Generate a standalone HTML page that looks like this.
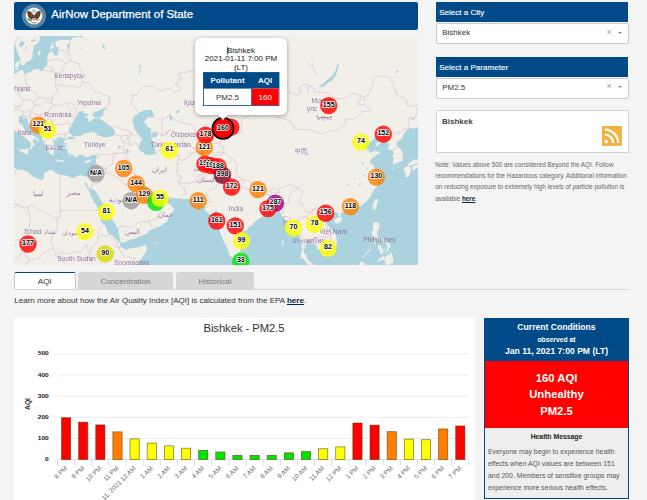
<!DOCTYPE html>
<html>
<head>
<meta charset="utf-8">
<title>AirNow Department of State</title>
<style>
html,body{margin:0;padding:0;}
body{width:647px;height:500px;overflow:hidden;background:#f4f4f4;font-family:"Liberation Sans",sans-serif;position:relative;color:#333;}
.abs{position:absolute;}
#hdr{left:14px;top:2px;width:404px;height:27.5px;background:#004a87;border-radius:2px;}
#hdr .t{position:absolute;left:37.3px;top:5.2px;font-size:11.4px;line-height:14px;color:#fff;white-space:nowrap;-webkit-text-stroke:0.25px #fff;}
#map{left:14px;top:36px;width:404px;height:229px;background:#f2efe9;overflow:hidden;}
.sh{background:#004a87;color:#fff;font-size:8.06px;line-height:21.4px;height:20.4px;padding-left:3.2px;box-sizing:border-box;-webkit-text-stroke:0.12px #fff;}
.dd{background:#fff;border:1px solid #ccc;border-radius:2px;box-sizing:border-box;height:20.9px;font-size:8px;line-height:17.9px;padding-left:5.2px;color:#333;}
.dd .x{position:absolute;right:16.3px;top:-0.6px;font-size:9px;color:#999;}
.dd .ar{position:absolute;right:6.3px;top:7.6px;width:0;height:0;border-left:2.3px solid transparent;border-right:2.3px solid transparent;border-top:2.8px solid #888;}
#citybox{left:436px;top:110px;width:193px;height:42.6px;background:#fff;border:1px solid #d2d2d2;box-sizing:border-box;}
#citybox .n{position:absolute;left:5px;top:6.3px;font-size:8px;font-weight:bold;color:#444;line-height:10px;}
#note{left:435.3px;top:158.8px;width:200px;font-size:6.32px;line-height:11.25px;color:#666;white-space:nowrap;}
#note b{color:#00264d;text-decoration:underline;}
.tab{top:272px;height:18px;box-sizing:border-box;border:1px solid #d6d6d6;border-radius:2.5px 2.5px 0 0;background:#d6d6d6;font-size:8px;line-height:18px;text-align:center;color:#777;}
.tab.sel{background:#fff;border-color:#c4c4c4;border-top:1.5px solid #004a87;border-bottom:none;color:#333;border-radius:2px 2px 0 0;line-height:17.6px;}
#tabline{left:14px;top:289px;width:615px;height:1px;background:#d6d6d6;}
#learn{left:14.3px;top:295px;font-size:8.04px;line-height:11px;color:#333;white-space:nowrap;}
#learn b{color:#00264d;text-decoration:underline;}
#chart{left:14px;top:318px;width:461px;height:182px;background:#fff;}
#cc{left:484px;top:318px;width:145px;height:181px;box-sizing:border-box;border:1px solid #004a87;background:#eee;}
#cc .h{background:#004a87;color:#fff;text-align:center;height:42px;font-weight:bold;font-size:8.6px;line-height:12px;padding-top:0;box-sizing:border-box;}
#cc .r{background:#f00;color:#fff;text-align:center;height:67px;font-weight:bold;font-size:11.3px;line-height:16.4px;box-sizing:border-box;padding-top:8.7px;}
#cc .hm{text-align:center;font-weight:bold;font-size:6.85px;line-height:10px;color:#222;margin-top:4.4px;}
#cc .tx{font-size:6.89px;line-height:12px;color:#555;margin:3.3px 0 0 3px;white-space:nowrap;}
</style>
</head>
<body>
<div id="hdr" class="abs"><svg class="abs" style="left:8px;top:1.8px" width="24" height="24" viewBox="-12 -12 24 24"><circle r="11.8" fill="#b9ab52"/><circle r="11.2" fill="#3b78bd"/><circle r="9.9" fill="none" stroke="#cfe0f2" stroke-width="0.9" stroke-dasharray="0.7 0.9" opacity=".55"/><circle r="8.7" fill="#c9bc6a"/><circle r="8.1" fill="#fff"/><circle cy="-4.8" r="2.1" fill="#a6d3ec"/><path d="M-1-1.6C-2.6-4.6-5.4-5.6-6.6-4.6C-7-1.2-5.6 2-2.6 3.9L-1 1.4ZM1-1.6C2.6-4.6 5.4-5.6 6.6-4.6C7-1.2 5.6 2 2.6 3.9L1 1.4Z" fill="#5b3b1d"/><path d="M-4.6-4.2L-3.2 2.6M-3.1-3.6L-2.2 2M4.6-4.2L3.2 2.6M3.1-3.6L2.2 2" stroke="#8a6a46" stroke-width=".35"/><path d="M-1.3-1.2h2.6v2.2h-2.6z" fill="#6b4a2a"/><ellipse cx="0" cy="-2.2" rx="1.1" ry="1.3" fill="#f4efe6"/><path d="M-1.8 1h3.6v1.2h-3.6z" fill="#2b4f9e"/><path d="M-1.8 2.2h3.6v1.5q-1.8 2-3.6 0z" fill="#e4534f"/><path d="M-0.9 2.2v2.4M0 2.2v2.9M0.9 2.2v2.4" stroke="#fff" stroke-width=".35"/><path d="M-6.2 2.4q1.4 2.8 3.8 2.2" stroke="#3d8b3d" stroke-width="1.3" fill="none"/><path d="M6 3q-1.4 2-3.6 1.8" stroke="#8a7a4a" stroke-width="0.7" fill="none"/><path d="M-2.6 5.6q2.6 1.2 5.2 0v1.2q-2.6 1.2-5.2 0z" fill="#8a7a6a" opacity=".75"/></svg><div class="t">AirNow Department of State</div></div>
<div id="map" class="abs"><!--MAP-->
<svg width="404" height="229" viewBox="0 0 404 229" style="position:absolute;left:0;top:0" font-family="Liberation Sans, sans-serif">
<defs><filter id="bl" x="-5%" y="-5%" width="110%" height="110%"><feGaussianBlur stdDeviation="0.45"/></filter><filter id="bl2" x="-5%" y="-5%" width="110%" height="110%"><feGaussianBlur stdDeviation="0.3"/></filter><filter id="sh" x="-20%" y="-20%" width="140%" height="150%"><feGaussianBlur stdDeviation="2"/></filter></defs>
<rect width="404" height="229" fill="#f2efe9"/>
<g filter="url(#bl)">
<path fill="#aad3df" d="M347.7 127.3 L348.2 125.5 L349.1 126.1 L349.4 127.7 L348.8 129.1 L348.1 128.6Z M352.2 132.5 L352.9 131.3 L354.0 131.7 L354.5 132.7 L353.7 133.7 L352.6 133.3Z M348.9 139.3 L349.5 138.5 L350.5 138.7 L350.9 139.4 L350.2 140.1 L349.3 139.8Z M344.8 148.4 L345.4 146.7 L346.4 147.2 L346.8 148.7 L346.1 150.1 L345.2 149.6Z M333.1 148.6 L333.8 147.5 L335.0 147.8 L335.4 148.8 L334.6 149.7 L333.6 149.4Z M357.4 140.6 L358.1 139.5 L359.3 139.8 L359.7 140.9 L358.9 141.8 L357.9 141.4Z M348.7 64.5 L349.4 62.5 L350.7 63.0 L350.0 64.8Z M380.9 37.2 L382.8 34.4 L385.1 34.9 L382.8 36.6Z M397.6 84.2 L397.9 81.4 L399.9 81.9 L399.6 84.2Z M26.0 -3.0 L64.0 -3.0 L63.7 1.3 L59.4 1.3 L56.2 4.2 L51.2 3.9 L48.0 3.5 L45.7 4.2 L43.0 4.8 L41.1 6.1 L41.4 8.7 L42.0 10.6 L44.7 11.5 L44.3 14.3 L44.2 18.0 L43.0 19.8 L40.4 19.5 L38.4 15.2 L35.5 16.4 L34.5 17.7 L33.2 22.8 L33.5 27.5 L32.9 29.8 L29.9 31.8 L29.6 34.6 L27.9 35.2 L25.6 35.1 L25.2 33.2 L24.3 32.7 L20.1 33.5 L16.8 35.8 L12.5 37.2 L10.9 37.7 L9.6 36.3 L8.9 33.8 L7.0 34.6 L5.0 34.9 L4.0 36.3 L1.7 37.2 L0.1 37.4 L-0.3 35.5 L-1.2 34.4 L-4.5 32.7 L-4.5 6.1 L1.0 8.0 L2.0 12.4 L3.3 15.5 L4.7 19.8 L6.6 22.2 L5.6 24.6 L6.6 27.5 L7.0 29.2 L9.6 29.2 L11.2 28.1 L12.2 25.7 L15.5 24.8 L17.1 24.0 L18.1 21.6 L18.4 18.6 L19.1 14.9 L19.4 10.6 L21.1 9.0 L23.4 8.0 L25.3 4.8 L26.3 2.2 L25.3 0.3Z M-6.2 85.6 L-3.5 87.2 L-1.9 89.7 L-1.2 92.4 L0.7 94.6 L3.0 95.9 L4.3 97.5 L5.6 98.8 L8.9 99.9 L10.9 101.6 L11.5 102.5 L12.9 102.3 L13.5 103.8 L14.5 105.1 L15.5 104.8 L16.8 107.8 L17.4 109.7 L16.5 110.6 L15.6 113.1 L17.0 113.8 L17.8 112.5 L18.6 110.4 L20.6 109.1 L20.4 107.6 L18.4 106.1 L19.7 103.3 L20.7 103.1 L23.4 104.8 L24.5 105.9 L25.0 104.4 L23.2 102.3 L19.6 100.1 L16.5 98.1 L17.4 96.8 L14.5 96.8 L13.5 96.4 L10.9 94.4 L8.6 89.2 L5.5 87.2 L4.7 85.1 L5.3 83.0 L4.7 80.9 L7.3 79.5 L9.4 79.8 L8.6 80.7 L9.7 83.5 L11.7 81.4 L13.2 82.8 L14.2 86.9 L16.5 88.8 L18.3 89.7 L21.4 91.7 L23.7 93.5 L25.6 94.6 L27.0 95.9 L28.1 99.4 L28.1 103.1 L29.9 105.7 L30.7 107.2 L32.4 109.5 L33.5 112.3 L37.8 112.0 L39.4 113.7 L35.5 112.5 L33.7 113.9 L34.7 115.0 L35.3 116.6 L35.5 118.5 L36.8 117.6 L38.1 120.1 L38.4 118.7 L40.4 119.9 L39.9 118.9 L39.1 115.4 L40.4 116.0 L39.8 113.9 L41.7 113.7 L43.0 115.0 L43.0 113.5 L41.7 111.6 L39.8 109.7 L38.4 109.9 L39.8 108.9 L39.6 107.8 L40.9 108.7 L40.1 106.8 L39.4 105.5 L38.4 104.0 L39.4 102.5 L40.9 104.2 L42.0 105.3 L41.4 104.0 L43.0 105.3 L42.4 103.6 L44.3 104.4 L43.0 103.3 L42.2 102.0 L44.3 101.2 L46.8 101.0 L49.3 101.4 L49.8 102.5 L52.2 102.3 L50.2 104.8 L51.9 103.3 L53.9 102.0 L54.5 100.7 L59.3 100.7 L62.4 101.8 L59.4 102.3 L59.1 103.3 L56.0 103.3 L53.9 103.3 L51.9 103.6 L50.9 104.4 L50.1 105.3 L49.8 107.2 L52.7 107.0 L51.7 108.0 L52.5 109.7 L52.1 110.8 L53.2 111.6 L50.9 110.8 L50.6 112.3 L52.2 112.9 L53.7 114.1 L53.7 116.2 L54.2 117.6 L56.2 117.6 L54.2 118.9 L57.1 118.5 L59.8 119.3 L61.4 121.1 L63.2 120.5 L64.0 120.9 L65.0 118.3 L69.3 119.5 L72.1 121.5 L75.7 120.5 L77.8 118.5 L80.4 119.5 L83.0 118.0 L82.9 119.5 L82.2 121.5 L81.6 123.7 L82.1 126.1 L81.7 127.9 L80.8 130.1 L79.8 132.7 L79.1 134.4 L78.3 137.4 L77.1 139.5 L75.2 140.8 L70.3 140.4 L68.6 139.5 L66.3 139.1 L64.0 139.7 L62.4 140.6 L59.1 142.0 L53.5 140.1 L49.3 139.1 L46.8 139.3 L43.0 137.4 L38.6 134.6 L36.1 134.1 L30.1 137.2 L30.2 141.8 L27.3 144.3 L23.4 142.4 L18.8 140.6 L13.8 136.0 L11.1 135.0 L7.6 134.1 L4.0 133.9 L0.7 131.7 L-2.6 130.1 L-0.4 126.7 L0.6 123.7 L-0.8 122.3 L-0.9 120.1 L0.6 117.4 L-1.9 118.3 L-3.4 116.4 L-6.2 116.4Z M59.8 99.9 L56.5 97.9 L54.5 94.2 L56.0 91.0 L57.6 90.1 L58.3 86.7 L61.6 82.1 L61.9 80.7 L63.4 78.8 L65.2 75.7 L67.6 75.3 L70.3 75.7 L68.3 76.0 L70.9 77.6 L72.2 77.6 L74.5 77.6 L74.5 78.8 L70.9 81.2 L73.9 81.9 L74.4 83.5 L74.0 84.9 L75.0 85.6 L76.3 85.1 L77.1 84.4 L79.1 83.5 L80.4 82.6 L81.7 82.8 L83.9 82.3 L84.4 81.2 L80.8 81.4 L79.1 79.5 L78.6 77.6 L80.1 76.5 L85.0 74.6 L87.5 72.9 L91.9 72.4 L93.2 72.9 L89.9 74.8 L89.4 77.9 L87.0 81.4 L85.2 80.9 L84.7 82.1 L86.7 83.3 L88.3 84.2 L89.1 84.9 L92.4 86.9 L94.5 89.2 L96.3 90.6 L98.8 91.9 L100.9 95.7 L100.8 97.9 L100.1 99.0 L97.2 100.5 L94.5 100.7 L90.3 101.2 L88.6 100.7 L86.7 100.1 L83.5 99.4 L82.4 97.7 L79.6 96.1 L75.0 96.5 L70.6 97.5 L68.6 98.8 L67.3 99.4 L66.5 100.3 L61.4 100.0Z M120.1 91.9 L122.7 96.1 L125.4 99.4 L127.3 102.5 L129.6 103.8 L128.0 103.6 L126.3 105.5 L126.0 107.8 L124.7 110.4 L124.7 111.8 L126.7 115.7 L129.0 116.0 L130.4 118.0 L132.9 119.1 L137.0 118.9 L141.4 118.3 L141.6 117.6 L141.1 116.2 L140.9 115.6 L140.8 111.4 L139.1 108.5 L137.8 107.4 L139.8 106.8 L140.1 105.1 L138.2 105.1 L137.3 102.9 L137.3 100.7 L139.8 101.8 L143.1 100.7 L143.7 97.2 L140.1 95.9 L137.8 98.6 L136.7 98.3 L136.3 96.4 L137.2 93.3 L134.2 91.0 L132.1 89.0 L130.9 86.5 L129.1 84.9 L131.6 84.9 L132.6 82.8 L134.5 80.9 L138.2 81.4 L140.1 80.0 L138.8 76.7 L138.2 73.8 L134.5 73.8 L129.3 74.6 L126.0 76.2 L123.4 78.6 L120.4 80.0 L119.1 82.3 L118.1 84.6 L118.8 86.5 L119.8 88.3Z M71.1 145.4 L71.6 146.7 L72.9 148.8 L74.5 151.8 L76.7 153.7 L77.0 153.1 L77.5 150.8 L78.0 149.0 L79.1 146.9 L78.9 147.8 L78.3 151.2 L77.8 152.5 L81.4 155.1 L83.9 159.2 L86.3 163.5 L89.1 166.9 L92.2 171.6 L92.7 176.2 L96.3 180.9 L99.0 184.4 L103.9 192.2 L105.2 199.3 L106.2 204.4 L106.8 206.6 L111.9 206.1 L114.2 204.2 L122.4 202.0 L125.4 200.2 L132.4 198.0 L135.5 194.6 L141.8 191.8 L145.7 190.3 L153.9 184.9 L153.6 182.7 L156.5 180.1 L160.5 172.7 L159.5 172.3 L156.5 168.7 L150.5 166.0 L149.1 163.2 L149.3 158.8 L148.3 159.7 L147.8 160.8 L145.7 162.8 L142.7 165.7 L138.2 166.8 L133.6 166.9 L132.6 165.3 L133.4 162.6 L133.6 160.4 L132.2 159.5 L130.9 162.3 L130.9 164.6 L129.0 161.3 L128.8 158.4 L128.8 157.5 L127.2 156.4 L124.4 153.8 L123.4 151.2 L121.8 147.7 L120.9 147.5 L122.4 145.4 L123.4 145.4 L124.7 143.9 L125.7 143.5 L128.8 145.0 L131.1 149.2 L135.0 153.3 L144.4 158.1 L149.0 155.8 L151.1 156.0 L153.9 161.3 L163.1 162.6 L168.8 163.3 L172.6 162.8 L176.4 163.0 L182.8 162.3 L184.1 164.2 L185.5 167.7 L188.0 168.7 L189.3 170.2 L191.8 171.4 L194.6 171.1 L190.8 172.8 L190.5 173.5 L192.6 175.7 L195.1 178.3 L197.2 179.0 L201.1 175.3 L202.4 173.4 L202.6 175.7 L202.9 177.6 L203.1 180.1 L203.1 184.9 L204.7 191.8 L206.4 197.1 L207.4 199.3 L209.7 205.8 L212.8 211.3 L214.4 215.6 L215.4 219.1 L216.5 220.6 L218.7 221.8 L220.8 219.5 L224.4 218.0 L226.2 214.5 L226.2 212.8 L226.2 209.1 L227.7 205.1 L227.2 200.4 L227.2 197.0 L230.5 194.7 L234.3 193.2 L234.1 191.8 L237.5 189.4 L242.8 184.1 L245.9 182.2 L248.7 180.4 L249.7 176.4 L251.3 175.8 L253.3 174.6 L255.6 175.8 L258.9 175.1 L261.5 173.7 L262.8 172.7 L265.4 173.4 L266.1 176.6 L267.1 178.7 L269.0 180.9 L271.2 183.5 L273.8 186.8 L274.4 189.8 L273.3 195.3 L274.6 195.8 L277.2 196.3 L279.2 194.2 L280.2 193.5 L282.1 190.8 L284.4 193.7 L285.1 197.8 L286.1 201.9 L287.7 207.3 L287.6 215.5 L286.7 219.3 L286.7 222.8 L288.7 221.9 L290.7 224.4 L292.5 226.7 L293.3 228.4 L293.5 230.7 L294.3 235.3 L121.8 235.3 L123.4 230.9 L125.0 227.1 L127.8 222.1 L131.3 217.1 L132.9 214.0 L132.4 209.3 L130.8 209.0 L125.7 211.1 L122.4 211.6 L118.5 211.8 L111.9 214.0 L107.0 211.0 L104.0 210.3 L105.8 210.1 L106.3 209.0 L106.3 207.1 L104.5 205.4 L98.6 199.7 L95.5 198.7 L93.7 196.6 L90.9 188.4 L88.1 187.0 L86.8 184.6 L86.3 182.9 L84.5 173.7 L81.7 167.7 L80.8 167.7 L78.8 163.5 L76.8 159.7 L75.7 157.3 L75.2 155.5 L72.9 151.4 L71.4 148.6 L70.4 146.7Z M303.5 235.3 L302.6 230.9 L299.7 228.1 L298.2 227.2 L296.4 225.7 L294.3 224.8 L292.6 220.8 L292.1 218.3 L290.2 218.1 L289.9 213.8 L291.7 209.5 L292.2 206.9 L292.5 204.9 L294.1 203.7 L295.4 204.2 L295.2 205.8 L295.3 206.6 L296.6 206.6 L299.2 207.1 L300.7 208.4 L302.0 210.1 L303.8 213.5 L306.1 213.6 L306.9 214.1 L309.0 215.5 L307.9 220.1 L309.7 219.6 L312.6 217.6 L314.5 214.8 L315.6 214.3 L318.9 212.5 L321.8 210.3 L322.5 209.1 L322.5 207.9 L323.3 205.8 L322.7 202.9 L321.5 198.2 L319.4 194.9 L317.6 193.4 L314.1 190.1 L311.2 185.8 L311.8 182.3 L314.5 179.0 L315.6 178.1 L318.6 176.2 L322.2 176.4 L324.3 176.6 L324.1 178.3 L324.9 180.6 L326.8 180.4 L326.6 177.4 L328.4 176.4 L331.7 175.3 L336.8 173.9 L336.9 171.8 L338.9 173.4 L342.8 171.8 L347.3 169.6 L351.7 165.7 L353.6 164.2 L356.8 160.1 L357.9 157.7 L360.7 153.1 L363.2 150.5 L364.3 146.1 L362.2 144.1 L360.9 143.9 L364.1 142.0 L364.1 139.1 L364.1 138.5 L360.9 133.7 L358.9 128.5 L355.6 126.7 L356.4 124.1 L359.1 121.5 L363.2 118.7 L366.4 116.8 L364.8 115.6 L362.5 115.4 L360.4 114.3 L357.6 116.4 L354.6 116.6 L355.5 114.3 L351.4 112.7 L350.5 111.0 L350.5 109.3 L353.3 108.7 L356.6 105.5 L360.9 102.0 L361.8 101.2 L365.0 102.5 L364.5 104.2 L362.5 107.2 L361.7 110.2 L363.5 109.7 L365.5 108.0 L367.8 106.6 L371.7 105.7 L372.2 105.9 L374.3 107.0 L375.3 108.0 L375.0 110.6 L373.2 113.1 L376.6 113.7 L379.6 115.8 L380.2 117.8 L378.1 118.7 L379.4 121.9 L378.7 126.5 L379.2 128.5 L383.3 126.9 L387.6 125.3 L388.7 123.7 L388.9 121.5 L388.7 117.6 L387.3 114.5 L386.1 112.7 L382.3 108.7 L382.8 105.9 L384.8 105.1 L388.1 102.3 L390.1 97.2 L392.0 95.0 L393.3 93.7 L396.9 91.5 L400.2 92.8 L403.8 91.0 L410.4 87.4 L410.4 235.3Z M5.0 8.0 L7.6 5.2 L10.6 5.5 L9.9 8.7 L7.6 10.9 L5.3 10.9Z M10.6 14.9 L11.9 10.6 L13.3 9.3 L12.5 12.4 L11.2 15.2Z M16.8 4.5 L20.1 3.2 L23.0 4.2 L20.1 5.2 L17.4 5.5Z M52.9 8.7 L54.5 7.4 L55.8 9.9 L54.5 11.8 L56.2 13.7 L56.6 14.6 L55.2 14.3 L54.2 12.4 L53.2 11.2Z M62.7 -3.0 L72.6 -3.0 L71.2 -0.4 L67.6 1.3 L66.0 1.6Z M88.0 10.6 L89.6 8.0 L90.9 9.0 L90.3 11.5 L91.9 13.1 L90.6 13.4Z M66.0 12.4 L67.5 11.2 L68.0 12.4 L67.0 13.1Z M161.8 76.2 L163.7 74.3 L166.4 74.8 L164.4 76.7 L162.8 77.6Z M155.2 78.6 L156.5 78.4 L158.2 81.4 L157.5 84.6 L155.9 85.1 L155.7 81.9Z M151.3 96.4 L153.2 95.9 L153.6 98.1 L151.9 98.6Z M205.4 78.1 L207.0 75.3 L210.3 74.3 L215.2 74.6 L220.2 75.3 L223.4 74.6 L224.1 76.2 L218.5 76.7 L213.6 76.2 L209.7 77.2 L208.0 80.5 L206.4 80.9Z M214.2 94.6 L216.9 93.5 L220.8 93.3 L221.1 94.6 L217.5 95.9Z M304.8 50.7 L308.1 48.6 L312.0 44.9 L317.9 39.9 L321.8 33.8 L323.8 27.5 L324.8 27.5 L324.1 32.7 L321.8 39.4 L318.6 43.8 L313.6 47.0 L310.4 50.2 L307.1 51.2Z M293.3 55.9 L294.0 50.2 L294.9 50.7 L294.3 55.9Z M267.1 58.0 L268.7 55.4 L270.7 56.4 L269.4 58.0Z M291.0 118.5 L292.6 116.8 L294.6 118.0 L294.0 119.3 L292.0 119.3Z M103.4 111.0 L105.4 109.3 L107.0 110.6 L106.3 112.3 L104.0 112.3Z M112.2 116.0 L112.6 112.7 L113.9 113.1 L114.9 116.4 L113.6 117.2Z M111.9 102.5 L112.9 102.5 L113.9 104.2 L112.9 104.2Z M73.2 111.0 L74.2 109.3 L74.8 110.6Z M237.5 69.0 L240.5 67.5 L242.8 68.5 L239.8 69.5Z M230.6 78.1 L232.0 76.5 L233.3 77.2 L232.3 78.6Z M124.7 28.6 L126.0 30.4 L126.0 34.4 L123.7 37.2 L125.0 37.7 L127.0 33.8 L126.7 29.2Z M304.4 204.7 L305.8 205.4 L307.4 207.1 L306.4 207.1 L305.1 205.8Z"/>
<path fill="#f2efe9" d="M0.7 27.5 L2.7 26.0 L4.7 25.1 L5.6 27.5 L4.7 30.1 L4.0 31.8 L2.7 31.2 L1.0 30.4Z M0.4 32.4 L3.3 31.8 L4.2 32.9 L3.3 34.1 L1.4 33.5Z M-4.5 31.5 L0.1 30.9 L-0.3 28.1 L-2.2 27.5 L-1.9 24.6 L0.1 23.4 L-1.6 21.6 L-1.2 16.8 L-1.1 15.2 L-4.5 16.1Z M23.7 18.6 L24.3 16.1 L26.0 14.3 L27.0 14.3 L26.0 17.4 L24.7 20.1Z M18.1 24.3 L18.8 21.6 L20.1 18.0 L20.4 17.7 L19.1 22.2 L18.4 24.6Z M36.0 11.8 L37.1 9.9 L39.8 9.6 L40.7 10.9 L38.8 12.1 L37.1 13.7Z M36.8 8.0 L38.4 6.8 L39.8 7.7 L38.8 9.3Z M12.5 30.9 L12.9 29.8 L14.0 30.7 L13.8 31.5Z M5.3 113.5 L8.1 112.9 L10.2 113.3 L14.3 112.5 L15.5 112.5 L13.8 115.6 L14.5 117.4 L13.8 119.0 L11.1 117.4 L8.8 116.4 L5.1 114.3Z M41.6 123.3 L41.7 124.7 L45.3 125.3 L45.5 126.0 L48.9 125.7 L50.6 125.5 L50.6 124.5 L48.8 124.3 L46.6 124.3 L44.0 124.1 L43.4 123.3 L42.2 123.1Z M70.3 125.5 L71.6 127.1 L72.6 127.3 L74.5 126.3 L76.0 125.7 L77.8 122.9 L75.5 124.1 L72.6 124.3 L72.2 124.9 L71.1 125.1Z M55.3 121.1 L56.5 119.9 L57.0 120.1 L56.2 121.7 L55.3 122.1Z M49.1 108.5 L50.9 107.8 L51.6 109.1 L50.2 109.3Z M49.3 111.2 L50.1 111.2 L49.9 112.7 L49.3 112.7Z M40.4 109.3 L41.2 109.5 L43.7 110.8 L45.0 112.9 L44.8 113.7 L43.4 112.7 L41.7 111.4 L40.7 110.4Z M28.8 106.1 L29.7 105.9 L30.2 107.4 L29.6 107.6Z M31.2 112.7 L31.9 111.6 L32.5 113.1 L31.6 113.3Z M47.5 117.6 L48.3 116.8 L48.3 117.8Z M-2.6 93.0 L-1.4 92.6 L-1.6 93.3Z M226.2 216.1 L227.5 216.0 L229.3 218.0 L230.8 220.3 L232.3 223.1 L232.8 225.7 L230.3 228.4 L228.7 229.0 L227.4 228.6 L226.2 225.6 L226.1 222.1 L226.4 219.0 L226.4 216.5Z M268.4 203.4 L269.5 204.4 L269.2 208.8 L268.5 210.5 L267.9 208.1Z M139.1 206.9 L141.4 206.4 L143.1 206.9 L140.8 207.8Z M361.2 163.7 L363.0 162.6 L364.3 163.7 L363.2 167.3 L362.5 170.5 L360.7 174.6 L358.9 172.3 L358.2 169.5 L359.4 166.6Z M320.7 184.9 L320.8 183.2 L322.5 181.8 L325.1 181.3 L327.1 181.1 L328.4 182.7 L326.8 185.6 L323.6 187.7 L320.8 186.7Z M359.7 186.5 L361.5 186.2 L365.1 186.7 L365.5 190.8 L364.5 194.6 L363.2 195.6 L363.2 199.0 L363.7 201.4 L365.8 202.0 L367.3 201.0 L368.7 202.2 L370.7 202.9 L371.4 205.4 L371.4 206.9 L368.7 205.4 L366.4 204.7 L364.5 202.9 L362.2 203.4 L360.9 202.9 L359.9 201.4 L361.0 200.0 L359.7 200.5 L358.2 199.3 L357.3 195.1 L358.9 195.1 L359.1 193.2 L359.1 189.9Z M358.9 203.9 L361.0 203.7 L363.0 205.1 L362.7 207.8 L361.5 208.1 L360.4 206.1Z M348.7 220.9 L352.3 216.8 L355.6 213.5 L356.3 210.8 L356.9 213.8 L354.0 216.5 L351.0 219.5 L349.2 221.4Z M372.0 206.9 L375.3 206.9 L376.8 211.8 L374.3 211.8 L373.7 210.5Z M372.2 210.8 L374.3 211.1 L375.0 214.8 L373.5 215.1Z M364.1 209.1 L368.1 210.3 L366.4 214.0 L364.3 214.0Z M365.8 215.6 L367.4 212.3 L369.4 212.5 L368.2 218.6 L366.4 217.5Z M368.9 217.3 L369.7 214.1 L371.2 211.3 L370.7 214.1Z M370.4 216.8 L372.8 215.1 L373.0 216.3 L371.0 217.0Z M364.1 225.6 L364.8 222.4 L367.4 221.6 L369.1 219.8 L370.5 221.8 L371.9 220.1 L373.5 218.8 L376.0 218.8 L375.8 216.1 L378.2 218.0 L378.7 221.1 L379.6 224.4 L378.2 227.7 L376.6 228.1 L376.4 225.4 L375.6 230.0 L374.8 229.0 L371.7 228.1 L371.0 225.4 L371.7 224.8 L369.2 223.9 L367.1 223.8 L365.1 225.7Z M341.5 235.3 L343.2 230.0 L345.0 228.7 L347.3 225.6 L348.9 225.7 L350.4 227.4 L351.7 229.2 L355.3 231.0 L353.0 235.3Z M389.7 132.9 L390.7 131.3 L393.7 129.9 L396.3 131.3 L396.9 134.1 L395.3 139.9 L393.0 141.4 L391.4 140.2 L391.4 136.4 L390.1 134.8Z M393.7 129.7 L394.0 128.1 L397.3 125.7 L399.6 123.7 L401.5 123.5 L404.8 123.3 L410.4 122.9 L410.4 128.5 L407.4 127.3 L403.8 127.3 L400.6 128.5 L398.3 128.5 L397.3 130.1 L394.6 129.9Z M397.6 132.1 L399.9 129.5 L402.5 128.7 L405.5 128.5 L406.1 130.5 L404.5 132.5 L401.5 132.5 L400.2 134.6 L398.9 133.9Z M378.1 132.5 L379.6 131.5 L380.7 131.9 L379.6 132.9Z M388.1 129.1 L388.9 127.1 L388.6 129.1Z M383.0 159.7 L385.0 157.1 L383.8 159.0Z M276.6 230.0 L277.9 230.0 L284.1 231.2 L285.8 235.3 L279.2 235.3Z"/>
<path fill="#aad3df" opacity="0.45" d="M297.6 24.0 L298.5 24.6 L299.5 31.5 L302.2 36.0 L303.5 40.5 L302.5 40.5 L300.8 36.0 L298.2 31.5Z M293.0 26.9 L294.0 26.3 L297.2 30.4 L298.5 30.9 L298.2 32.1 L296.2 30.9Z M262.8 30.4 L264.1 31.5 L265.7 36.0 L264.4 37.7 L264.1 34.4Z"/>
<path fill="none" stroke="#c9a9c7" stroke-opacity="0.75" stroke-width="0.6" stroke-linejoin="round" d="M125.0 77.2 L123.4 75.3 L118.5 68.5 L116.8 66.5 L118.8 62.5 L117.8 59.0 L123.1 59.5 L124.4 55.4 L130.9 49.7 L135.9 50.7 L139.5 50.7 L143.1 53.3 L147.0 55.4 L153.9 52.8 L156.5 53.3 L159.5 55.9 L165.7 54.4 L166.7 51.8 L161.1 48.1 L164.4 46.5 L165.0 42.7 L168.0 42.7 L165.0 39.4 L164.4 37.2 L171.3 36.6 L175.9 34.9 L178.2 35.5 L180.8 33.8 L188.0 31.5 L194.6 30.4 L197.2 36.6 L201.1 36.0 L205.1 39.9 L205.7 37.2 L211.6 37.7 L215.2 36.0 L219.8 41.0 L226.7 54.4 L231.6 54.4 L234.9 54.4 L237.9 53.3 L244.1 58.0 L249.0 59.5 L250.7 62.5 L252.3 62.5 M250.7 62.5 L245.7 66.5 L244.8 72.9 L236.6 72.4 L234.3 80.5 L229.3 82.3 L227.4 83.7 L228.0 91.9 L227.4 95.5 M227.4 95.5 L223.4 92.8 L213.6 92.4 L207.7 91.0 L205.4 94.6 L199.8 92.8 L196.9 95.0 M196.9 95.0 L191.0 99.0 L187.4 100.7 L182.4 100.3 L180.8 94.6 L181.1 91.9 L177.2 88.8 L164.7 86.0 L156.2 80.0 L148.0 82.8 L148.0 99.4 M148.0 99.4 L144.4 96.8 L139.8 95.9 L136.5 97.5 M148.0 99.4 L151.3 99.4 L154.6 94.2 L161.1 95.5 L161.4 99.0 L167.3 100.3 L169.0 105.1 L174.9 109.7 L179.5 112.3 L182.8 116.0 M141.1 116.2 L144.1 116.0 L146.0 113.5 L151.9 112.3 L155.9 115.2 L158.8 115.6 L162.1 119.3 L165.0 119.3 L165.0 123.3 M165.0 123.3 L168.7 124.5 L171.3 122.5 L175.9 120.5 L176.9 117.2 L182.8 116.0 L186.7 116.8 L187.4 117.6 L191.6 117.2 L194.6 115.2 L194.9 112.7 L198.2 112.3 L199.2 117.6 L203.1 116.8 L204.7 115.8 L210.0 116.6 M210.0 116.6 L207.0 118.5 L199.2 120.1 L197.8 121.7 L199.2 124.9 L197.5 128.5 L193.9 129.7 L194.9 132.5 L192.3 133.7 L191.6 137.9 L187.4 139.1 L183.7 140.2 L182.1 141.8 L181.8 145.6 L174.9 147.1 L169.3 147.5 L164.1 145.8 M164.1 145.8 L167.0 142.2 L166.7 139.9 L163.7 139.5 L162.8 133.7 L164.1 131.7 L162.8 129.3 L164.4 124.9 L165.0 123.3 M164.1 145.8 L167.0 150.5 L170.3 152.0 L170.3 155.7 L171.6 155.7 L171.9 157.9 L168.7 158.6 L166.4 163.0 M219.5 123.7 L213.6 127.3 L208.0 126.9 L206.7 132.9 L208.3 134.4 L211.3 136.4 L208.3 141.0 L206.7 145.2 L203.4 149.0 L200.1 153.1 L195.9 152.7 L192.3 157.1 L194.6 161.2 L197.2 165.9 L190.0 166.2 L188.0 168.4 M210.0 116.6 L213.3 119.3 L219.5 123.7 M219.5 123.7 L223.4 128.5 L221.5 135.2 L224.1 141.4 L230.3 144.4 L233.6 144.1 L240.2 149.3 L246.4 152.7 L253.3 153.1 M230.3 144.4 L227.0 149.7 L231.0 152.3 L237.5 154.9 L242.1 155.7 L246.1 157.9 L253.3 158.6 L253.3 153.1 L255.9 155.3 L258.2 152.0 L264.8 153.4 L271.0 150.1 L277.2 148.6 L280.8 151.2 L283.5 151.6 M255.9 155.3 L256.6 157.1 L260.8 156.8 L266.1 156.8 L264.8 153.4 M253.3 158.6 L255.6 159.0 L256.2 162.6 L254.3 163.0 L253.3 165.5 L255.6 166.6 L254.9 170.2 L256.2 174.1 L256.2 175.5 M255.6 159.0 L258.5 159.3 L258.9 162.6 L267.4 163.3 L266.7 166.6 L263.4 167.3 L263.4 169.1 L264.8 171.2 L267.1 168.4 L268.0 176.9 L267.1 178.7 M283.5 151.6 L282.5 153.8 L279.5 155.3 L276.2 157.9 L274.6 163.0 L274.9 167.3 L270.3 167.3 L270.7 170.9 L269.4 174.8 L268.0 176.9 M283.5 151.6 L286.1 153.8 L288.0 154.6 L288.0 160.4 L284.4 164.4 L284.8 167.3 L288.0 167.3 L289.0 170.5 L290.7 171.2 L289.7 174.1 L293.0 176.6 L295.9 175.1 L296.2 177.3 L292.6 180.4 L289.0 181.5 L285.8 182.5 L283.8 186.7 L285.1 189.8 L287.4 192.5 L287.7 195.3 L286.4 198.3 L289.4 202.4 L289.7 206.8 L291.0 209.5 L288.4 214.1 L287.6 215.5 M296.2 177.3 L298.2 177.3 L298.2 173.0 L299.2 173.0 L302.2 172.3 L305.1 172.3 L308.1 170.5 L309.7 169.8 L314.0 171.2 L314.3 174.4 L316.6 175.8 L318.6 176.2 M299.2 173.0 L301.8 175.5 L302.5 178.7 L307.4 179.7 L305.8 182.9 L309.4 186.0 L313.6 191.8 L316.9 195.6 L317.2 199.7 L316.9 207.1 L313.3 209.8 L311.3 210.1 L312.3 212.1 L309.0 212.5 L306.9 214.1 M292.6 180.4 L294.0 182.9 L296.2 183.2 L296.2 189.8 L299.2 187.7 L303.1 187.0 L305.4 187.4 L307.7 190.1 L308.1 193.9 L310.7 197.0 L309.4 201.0 L312.0 202.4 L312.3 200.7 L317.2 199.7 M309.4 201.0 L302.2 201.4 L300.2 203.4 L301.8 209.8 M292.6 227.4 L295.9 229.7 L298.2 229.4 L299.2 228.1 M252.3 62.5 L255.9 68.0 L260.5 70.0 L262.8 78.1 L262.5 81.4 L271.0 82.8 L277.2 86.0 L280.5 93.3 L292.3 93.7 L298.2 94.2 L308.7 98.1 L316.9 94.6 L322.8 94.6 L328.4 90.1 L331.7 88.3 L331.3 82.3 L336.9 83.7 L343.8 80.5 L347.1 76.2 L349.4 75.3 L357.6 74.8 L350.7 68.5 L344.1 69.0 L347.1 59.5 M252.3 62.5 L258.5 59.0 L267.4 54.4 L273.6 55.9 L283.5 59.5 L286.7 55.9 L285.8 50.7 L292.0 48.1 L299.5 51.8 L299.9 55.4 L308.7 56.4 L314.3 57.0 L320.2 62.0 L327.4 63.0 L334.6 61.0 L339.2 57.0 L347.1 59.5 M347.1 59.5 L351.0 61.0 L355.0 58.0 L360.2 45.4 L357.9 43.8 L360.9 41.0 L369.7 39.9 L376.3 42.1 L380.5 51.8 L382.8 59.5 L389.1 61.5 L392.7 64.0 L393.7 70.0 L398.9 70.0 L406.1 66.5 L400.9 82.3 L396.6 81.4 L394.0 83.3 L395.0 89.7 L392.7 94.6 M392.7 94.6 L390.4 91.9 L387.4 95.9 L384.2 96.4 L385.1 98.6 L380.5 97.2 L377.6 101.2 L372.2 105.5 M377.9 114.3 L379.9 113.9 L381.2 112.3 L385.1 111.0 M227.4 95.5 L221.8 98.1 L216.5 100.7 L214.6 103.3 L209.7 102.9 L206.4 105.9 L206.0 107.2 L205.7 109.3 L210.0 111.8 L210.0 116.6 M206.0 107.2 L200.5 107.6 L195.6 106.8 L191.6 107.2 L192.3 104.6 L195.9 105.1 L195.2 102.9 M196.9 95.0 L198.2 95.5 L195.2 98.6 L199.2 98.6 L201.1 100.7 L204.1 101.6 L201.5 103.3 L199.5 104.2 L195.9 104.2 M191.6 107.2 L189.0 107.2 L185.4 107.2 L186.7 109.3 L188.7 112.7 L186.7 116.8 M123.4 145.4 L121.8 143.3 L120.8 141.4 L121.1 137.5 L115.5 133.7 L113.2 129.7 L115.8 125.3 L113.2 121.7 L111.3 117.0 L109.3 113.5 L109.9 107.6 L111.3 106.3 L116.8 109.7 L121.8 106.3 L124.7 111.8 M111.3 117.0 L103.4 117.2 L95.5 118.5 L89.0 118.5 L84.7 118.5 L84.4 120.9 L82.2 121.9 M103.4 117.2 L99.4 120.1 L98.8 128.1 L91.6 132.1 L85.0 136.4 L81.4 134.8 M91.6 132.1 L92.9 136.8 L96.8 137.9 L102.1 141.0 L110.9 148.2 L116.8 148.6 L119.8 149.0 L120.8 150.8 L123.1 150.8 M116.8 148.6 L118.5 146.0 L121.6 145.2 M92.9 136.8 L85.7 139.5 L89.0 143.3 L87.3 145.2 L82.4 148.2 L79.1 147.7 M78.8 147.1 L76.7 140.2 M79.1 146.9 L80.8 139.5 L80.9 136.0 L81.4 134.8 L81.1 132.7 L83.7 127.7 L82.2 127.1 M104.7 193.9 L106.3 190.1 L110.3 190.5 L117.8 191.8 L121.8 188.4 L125.0 186.3 L134.9 184.9 L138.5 193.0 M134.9 184.9 L144.7 181.5 L147.0 174.4 L145.4 171.9 L136.8 171.2 L133.6 166.9 M145.4 171.9 L147.3 167.3 L148.0 164.1 L149.1 161.5 M130.9 164.6 L132.2 165.1 M46.8 139.3 L45.3 144.8 L46.3 148.2 L46.3 174.4 L46.3 181.5 L43.0 181.5 L43.0 183.2 L43.0 196.3 L39.4 197.0 L38.1 201.7 L36.8 205.4 L39.4 210.8 L39.4 212.5 L42.0 215.8 L41.4 219.8 L43.7 221.1 L47.0 222.8 L54.2 231.7 M46.3 174.4 L67.0 174.4 L73.2 174.4 L85.3 174.4 M43.0 183.2 L16.8 169.3 L13.5 170.9 L10.9 172.3 L3.7 169.1 L-2.9 165.5 L-4.5 158.6 L-3.2 152.7 L-4.5 144.4 L-2.2 144.1 L-1.9 138.3 L2.0 136.0 L2.0 133.1 M13.5 170.9 L15.2 178.0 L16.5 180.1 L15.2 192.2 L8.6 200.7 L8.9 203.1 L10.6 205.1 L12.2 208.1 L13.8 212.1 L13.5 215.5 L9.9 216.8 L15.2 223.8 L25.3 222.1 L27.0 218.8 L35.5 213.5 L39.4 212.5 M8.9 203.1 L0.1 204.4 L-4.5 206.1 M10.6 205.1 L7.6 215.5 L3.7 222.1 L0.4 226.4 M15.2 223.8 L12.2 228.7 L12.5 233.3 M3.7 169.1 L3.3 168.7 L-4.5 176.2 M43.7 221.1 L45.7 216.1 L51.6 217.1 L56.2 217.8 L59.4 216.5 L61.1 215.1 L66.6 216.1 L70.6 209.8 L73.2 208.1 L72.9 213.1 L76.2 217.1 L76.8 213.5 L79.4 209.5 L82.7 206.4 L84.0 201.0 L85.7 191.5 L90.9 188.4 M84.0 201.0 L88.6 199.0 L92.2 200.0 L96.2 200.4 L101.1 204.4 L103.4 207.1 L101.4 210.5 L105.0 212.1 L108.6 218.8 L118.5 222.1 L121.8 222.1 L111.6 232.3 M103.4 207.1 L105.7 206.4 M105.0 212.1 L106.3 210.6 M76.2 217.1 L72.6 222.1 L75.7 220.8 L80.1 230.7 L75.8 234.6 M10.9 37.7 L11.5 41.6 L10.7 43.8 L12.5 47.5 L13.3 53.3 L12.9 54.1 L11.2 53.3 L4.0 57.0 L5.3 59.0 L9.6 64.8 L6.1 68.0 L7.0 70.9 L4.3 70.4 L-1.2 70.9 M12.9 54.1 L17.8 55.4 L19.7 56.4 L22.4 57.0 L26.1 61.0 L29.9 62.5 L38.3 63.0 L38.8 60.5 L43.4 54.4 L41.7 50.7 L41.7 44.9 L42.7 37.7 L41.4 37.4 L39.1 35.2 L29.3 34.6 M9.6 64.8 L13.5 63.5 L19.7 65.5 L26.1 61.0 M39.1 35.2 L38.8 32.1 L36.8 31.2 L34.2 30.1 M33.4 25.3 L39.4 23.4 L46.0 23.4 L51.6 27.5 L56.6 24.8 L55.5 18.0 L54.0 16.4 L51.2 16.8 L47.3 13.7 L44.2 14.5 M41.4 37.4 L48.0 36.0 L48.9 32.1 L51.6 27.5 M54.0 16.4 L54.5 11.8 L56.2 4.8 M56.6 24.8 L65.7 28.1 L65.7 32.1 L68.6 36.6 L71.6 40.5 L67.3 41.6 L68.6 47.5 L75.2 45.9 L77.1 49.7 L81.1 56.4 L87.3 56.4 L89.0 59.0 L95.8 60.5 L94.9 68.5 L89.6 72.9 M41.7 50.7 L44.3 48.6 L53.5 50.2 L60.1 50.2 L64.7 51.8 L68.6 47.5 M38.3 63.0 L37.0 66.5 L39.4 68.5 L46.0 70.0 L51.6 67.3 L54.5 66.0 L60.1 69.0 L63.0 76.2 L56.8 80.7 L61.7 81.9 M51.6 67.3 L56.5 73.8 L56.8 80.7 M37.0 66.5 L31.6 66.0 L26.0 69.5 L20.7 68.5 L19.7 65.5 M20.7 68.5 L18.4 73.4 L17.1 74.1 L11.9 76.2 L9.2 75.7 L4.3 73.4 L-1.2 74.1 M39.4 68.5 L33.8 76.2 L30.9 77.4 L26.3 78.6 L20.1 78.1 L18.1 75.3 L17.1 74.1 M9.2 75.7 L8.9 79.1 L9.6 80.0 M8.9 80.5 L14.5 80.5 L18.1 75.3 M30.9 77.4 L34.5 81.9 L34.8 83.7 L38.1 84.6 L38.8 86.5 L39.8 88.3 L47.6 89.0 L52.9 86.7 L58.1 88.5 M38.8 86.5 L37.8 91.9 L39.8 91.0 L37.8 95.0 L39.4 99.2 L44.7 98.6 L50.7 97.7 L56.2 96.4 M50.7 97.7 L51.6 99.2 L49.8 101.8 M39.4 99.2 L35.8 101.0 L33.0 101.2 L31.9 104.6 L29.9 106.3 M33.0 101.2 L31.6 99.0 L31.9 96.4 L30.2 93.7 L27.9 96.8 M37.8 95.0 L34.8 95.3 L31.9 96.4 M26.3 78.6 L26.6 83.3 L27.9 87.4 L27.3 89.7 L25.0 93.7 M14.5 80.5 L16.0 81.9 L19.7 81.6 L26.6 83.3 M16.0 81.9 L17.1 86.5 L22.0 91.9 L24.8 94.2 M30.2 93.7 L27.3 89.7 M100.6 98.6 L106.8 100.3 L107.6 104.6 L111.3 106.3 M95.5 90.1 L103.7 91.0 L108.0 93.7 L111.9 93.3 L116.5 96.8 L121.1 99.9 L123.7 97.0 M116.5 96.8 L116.8 100.3 L111.9 99.4 L106.8 100.3 M111.9 99.4 L113.9 101.6 L115.2 106.8 L116.8 109.7 M0.7 6.8 L3.0 2.2 L5.3 0.3 L4.3 -5.7"/>
</g>
<g fill="#86649a" font-size="6.7" text-anchor="middle" opacity="0.85" filter="url(#bl2)">
<text x="54.9" y="41.8">Беларусь</text>
<text x="-2.0" y="54.7">Deutschland</text>
<text x="75.1" y="69.0">Україна</text>
<text x="43.7" y="80.9">România</text>
<text x="10.5" y="98.7">Italia</text>
<text x="80.6" y="111.1">Türkiye</text>
<text x="40.5" y="114.3">Ελλάς</text>
<text x="185.5" y="68.8">Қазақстан</text>
<text x="174.0" y="101.3">O'zbekiston</text>
<text x="156.5" y="111.3">Türkmenistan</text>
<text x="222.0" y="174.6">India</text>
<text x="18.5" y="197.6">Tchad</text>
<text x="62.5" y="224.6">South Sudan</text>
<text x="117.5" y="229.3">Soomaaliya</text>
<text x="319.3" y="198.1">Việt Nam</text>
<text x="365.5" y="205.9">Philippines</text>
<text x="309.0" y="66.5">Монгол</text>
<text x="298.0" y="75.0">улс</text>
<text x="309.5" y="84.0" font-size="4.6">ᠮᠣᠩᠭᠣᠯ</text>
<text x="286.6" y="116.6" font-size="5.6">中国</text>
<text x="145.0" y="136.0">ایران</text>
<text x="193.5" y="133.5">افغانستان</text>
<text x="193.5" y="146.0">پاکستان</text>
<text x="23.5" y="160.0">ليبيا</text>
<text x="59.5" y="158.5">مصر</text>
<text x="108.0" y="166.0">السعودية</text>
<text x="118.5" y="197.5">اليمن</text>
<text x="151.0" y="181.0">عمان</text>
<text x="35.6" y="197.6" font-size="5.8">تشاد</text>
<text x="58.0" y="198.5" font-size="5.8">السودان</text>
<text x="276.6" y="186.6">မြန်မာ</text>
<text x="294.4" y="207.0">ประเทศไทย</text>
</g>
<g>
<circle cx="24.4" cy="89.2" r="8.7" fill="#ff7e00" fill-opacity="0.8"/>
<circle cx="33.6" cy="94.1" r="8.7" fill="#ffff00" fill-opacity="0.8"/>
<circle cx="82.0" cy="137.5" r="8.7" fill="#999999" fill-opacity="0.8"/>
<circle cx="109.7" cy="132.5" r="8.7" fill="#ff7e00" fill-opacity="0.8"/>
<circle cx="122.1" cy="147.9" r="8.7" fill="#ff7e00" fill-opacity="0.8"/>
<circle cx="117.2" cy="164.7" r="8.7" fill="#999999" fill-opacity="0.8"/>
<circle cx="130.3" cy="159.3" r="8.7" fill="#ff7e00" fill-opacity="0.8"/>
<circle cx="141.9" cy="166.4" r="8.7" fill="#00e400" fill-opacity="0.8"/>
<circle cx="146.1" cy="162.2" r="8.7" fill="#ffff00" fill-opacity="0.8"/>
<circle cx="92.4" cy="175.8" r="8.7" fill="#ffff00" fill-opacity="0.8"/>
<circle cx="70.9" cy="195.6" r="8.7" fill="#ffff00" fill-opacity="0.8"/>
<circle cx="14.0" cy="208.0" r="8.7" fill="#ff0000" fill-opacity="0.8"/>
<circle cx="91.2" cy="217.9" r="8.7" fill="#d8d800" fill-opacity="0.8"/>
<circle cx="155.5" cy="114.2" r="8.7" fill="#ffff00" fill-opacity="0.8"/>
<circle cx="190.3" cy="111.5" r="8.7" fill="#ff7e00" fill-opacity="0.8"/>
<circle cx="191.5" cy="99.2" r="8.7" fill="#ff0000" fill-opacity="0.8"/>
<circle cx="190.9" cy="128.1" r="8.7" fill="#ff0000" fill-opacity="0.8"/>
<circle cx="197.3" cy="129.6" r="8.7" fill="#ff0000" fill-opacity="0.8"/>
<circle cx="204.0" cy="130.6" r="8.7" fill="#ff0000" fill-opacity="0.8"/>
<circle cx="208.5" cy="139.2" r="8.7" fill="#7e0023" fill-opacity="0.8"/>
<circle cx="217.6" cy="151.1" r="8.7" fill="#ff0000" fill-opacity="0.8"/>
<circle cx="244.0" cy="153.6" r="8.7" fill="#ff7e00" fill-opacity="0.8"/>
<circle cx="184.2" cy="164.7" r="8.7" fill="#ff7e00" fill-opacity="0.8"/>
<circle cx="261.4" cy="167.2" r="8.7" fill="#960078" fill-opacity="0.8"/>
<circle cx="254.0" cy="172.6" r="8.7" fill="#ff0000" fill-opacity="0.8"/>
<circle cx="202.8" cy="185.0" r="8.7" fill="#ff0000" fill-opacity="0.8"/>
<circle cx="221.3" cy="189.9" r="8.7" fill="#ff0000" fill-opacity="0.8"/>
<circle cx="227.5" cy="204.8" r="8.7" fill="#ffff00" fill-opacity="0.8"/>
<circle cx="226.8" cy="225.3" r="8.7" fill="#00e400" fill-opacity="0.8"/>
<circle cx="279.4" cy="191.9" r="8.7" fill="#ffff00" fill-opacity="0.8"/>
<circle cx="300.5" cy="188.2" r="8.7" fill="#ffff00" fill-opacity="0.8"/>
<circle cx="347.0" cy="106.0" r="8.7" fill="#ffff00" fill-opacity="0.8"/>
<circle cx="369.3" cy="98.2" r="8.7" fill="#ff0000" fill-opacity="0.8"/>
<circle cx="362.4" cy="141.1" r="8.7" fill="#ff7e00" fill-opacity="0.8"/>
<circle cx="336.4" cy="170.6" r="8.7" fill="#ff7e00" fill-opacity="0.8"/>
<circle cx="311.7" cy="177.2" r="8.7" fill="#ff0000" fill-opacity="0.8"/>
<circle cx="314.0" cy="212.3" r="8.7" fill="#ffff00" fill-opacity="0.8"/>
<circle cx="314.7" cy="69.6" r="8.7" fill="#ff0000" fill-opacity="0.8"/>
<circle cx="216.8" cy="91.2" r="8.7" fill="#ff0000" fill-opacity="0.8"/>
<circle cx="209" cy="92.4" r="10.6" fill="#ff0000" stroke="#000" stroke-width="1.5"/>
</g>
<g font-size="7.05" font-weight="bold" text-anchor="middle" fill="#000" stroke="#fff" stroke-width="1.6" stroke-linejoin="round" paint-order="stroke">
<text x="24.4" y="90.3">121</text>
<text x="33.6" y="95.2">51</text>
<text x="82.0" y="138.6">N/A</text>
<text x="109.7" y="133.6">105</text>
<text x="122.1" y="149.0">144</text>
<text x="117.2" y="165.8">N/A</text>
<text x="130.3" y="160.4">129</text>
<text x="146.1" y="163.3">55</text>
<text x="92.4" y="176.9">81</text>
<text x="70.9" y="196.7">54</text>
<text x="14.0" y="209.1">177</text>
<text x="91.2" y="219.0">90</text>
<text x="155.5" y="115.3">61</text>
<text x="190.3" y="112.6">121</text>
<text x="191.5" y="100.3">178</text>
<text x="190.9" y="129.2">191</text>
<text x="197.3" y="130.7">192</text>
<text x="204.0" y="131.7">188</text>
<text x="208.5" y="140.3">398</text>
<text x="217.6" y="152.2">172</text>
<text x="244.0" y="154.7">121</text>
<text x="184.2" y="165.8">111</text>
<text x="261.4" y="168.3">287</text>
<text x="254.0" y="173.7">175</text>
<text x="202.8" y="186.1">161</text>
<text x="221.3" y="191.0">151</text>
<text x="227.5" y="205.9">99</text>
<text x="226.8" y="226.4">33</text>
<text x="279.4" y="193.0">70</text>
<text x="300.5" y="189.3">78</text>
<text x="347.0" y="107.1">74</text>
<text x="369.3" y="99.3">152</text>
<text x="362.4" y="142.2">130</text>
<text x="336.4" y="171.7">118</text>
<text x="311.7" y="178.3">156</text>
<text x="314.0" y="213.4">82</text>
<text x="314.7" y="70.7">155</text>
<text x="209" y="93.5">160</text>
</g>
<rect x="181" y="2.700000000000003" width="92" height="77.3" rx="6" fill="#000" opacity="0.35" filter="url(#sh)"/>
<path d="M204 78.5L209 84L214 78.5Z" fill="#fff"/>
<rect x="181" y="1.7" width="92" height="77.3" rx="6" fill="#fff"/>
<g font-size="8" fill="#222" text-anchor="middle"><text x="227.0" y="16.6">Bishkek</text><text x="227.0" y="25.2">2021-01-11 7:00 PM</text><text x="227.0" y="33.8">(LT)</text></g>
<path d="M213.6 11.0v7.9" stroke="#111" stroke-width="0.7"/>
<rect x="189.5" y="36.5" width="75.5" height="33.1" fill="#fff" stroke="#004a87" stroke-width="0.8"/>
<rect x="189.5" y="36.5" width="75.5" height="16.1" fill="#004a87"/>
<rect x="237.5" y="52.599999999999994" width="27.1" height="16.6" fill="#ff0000"/>
<path d="M237.5 36.5V69.6" stroke="#004a87" stroke-width="0.6"/>
<g font-size="8" text-anchor="middle"><text x="213.5" y="47.2" fill="#fff" font-weight="bold">Pollutant</text><text x="251.2" y="47.2" fill="#fff" font-weight="bold">AQI</text><text x="213.5" y="63.8" fill="#333">PM2.5</text><text x="251.2" y="63.8" fill="#fff">160</text></g>
</svg>
<!--/MAP--></div>

<div class="abs sh" style="left:436px;top:2px;width:192px;">Select a City</div>
<div class="abs dd" style="left:436px;top:23.4px;width:193px;">Bishkek<span class="x">×</span><span class="ar"></span></div>
<div class="abs sh" style="left:436px;top:57px;width:192px;">Select a Parameter</div>
<div class="abs dd" style="left:436px;top:77.9px;width:193px;">PM2.5<span class="x">×</span><span class="ar"></span></div>

<div id="citybox" class="abs"><div class="n">Bishkek</div><svg class="abs" style="left:165.1px;top:14.8px" width="19.9" height="19.9" viewBox="0 0 20 20"><rect width="20" height="20" fill="#f2b33d"/><circle cx="4.4" cy="15.6" r="1.85" fill="#fff"/><path d="M2.9 8.7a8.4 8.4 0 0 1 8.4 8.4M2.9 3.7a13.4 13.4 0 0 1 13.4 13.4" stroke="#fff" stroke-width="2.3" fill="none"/></svg></div>
<div id="note" class="abs">Note: Values above 500 are considered Beyond the AQI. Follow<br>recommendations for the Hazardous category. Additional information<br>on reducing exposure to extremely high levels of particle pollution is<br>available <b>here</b>.</div>

<div class="abs tab sel" style="left:13.8px;width:61.8px;">AQI</div>
<div class="abs tab" style="left:78px;width:95px;">Concentration</div>
<div class="abs tab" style="left:176px;width:78px;">Historical</div>
<div id="tabline" class="abs"></div>
<div id="learn" class="abs">Learn more about how the Air Quality Index [AQI] is calculated from the EPA <b>here</b>.</div>

<div id="chart" class="abs"><!--CHART-->
<svg width="461" height="182" viewBox="0 0 461 182" style="position:absolute;left:0;top:0" font-family="Liberation Sans, sans-serif">
<path d="M43.5 120.45H454.9" stroke="#e6e6e6" stroke-width="0.8" fill="none"/>
<path d="M43.5 99.30H454.9" stroke="#e6e6e6" stroke-width="0.8" fill="none"/>
<path d="M43.5 78.15H454.9" stroke="#e6e6e6" stroke-width="0.8" fill="none"/>
<path d="M43.5 57.00H454.9" stroke="#e6e6e6" stroke-width="0.8" fill="none"/>
<path d="M43.5 35.85H454.9" stroke="#e6e6e6" stroke-width="0.8" fill="none"/>
<text x="34.8" y="143.10" text-anchor="end" font-size="5.9" font-weight="bold" fill="#222" textLength="3.7" lengthAdjust="spacingAndGlyphs">0</text>
<text x="34.8" y="121.95" text-anchor="end" font-size="5.9" font-weight="bold" fill="#222" textLength="11.1" lengthAdjust="spacingAndGlyphs">100</text>
<text x="34.8" y="100.80" text-anchor="end" font-size="5.9" font-weight="bold" fill="#222" textLength="11.1" lengthAdjust="spacingAndGlyphs">200</text>
<text x="34.8" y="79.65" text-anchor="end" font-size="5.9" font-weight="bold" fill="#222" textLength="11.1" lengthAdjust="spacingAndGlyphs">300</text>
<text x="34.8" y="58.50" text-anchor="end" font-size="5.9" font-weight="bold" fill="#222" textLength="11.1" lengthAdjust="spacingAndGlyphs">400</text>
<text x="34.8" y="37.35" text-anchor="end" font-size="5.9" font-weight="bold" fill="#222" textLength="11.1" lengthAdjust="spacingAndGlyphs">500</text>
<text transform="translate(16.4,86.0) rotate(-90)" text-anchor="middle" font-size="6.7" font-weight="bold" fill="#333">AQI</text>
<text x="230.0" y="13.6" text-anchor="middle" font-size="11.3" fill="#333" textLength="81" lengthAdjust="spacing">Bishkek - PM2.5</text>
<path d="M43.5 141.60H454.9" stroke="#ccd6eb" stroke-width="0.8" fill="none"/>
<path d="M43.50 141.60v6M60.64 141.60v6M77.78 141.60v6M94.92 141.60v6M112.06 141.60v6M129.20 141.60v6M146.34 141.60v6M163.48 141.60v6M180.62 141.60v6M197.76 141.60v6M214.90 141.60v6M232.04 141.60v6M249.18 141.60v6M266.32 141.60v6M283.46 141.60v6M300.60 141.60v6M317.74 141.60v6M334.88 141.60v6M352.02 141.60v6M369.16 141.60v6M386.30 141.60v6M403.44 141.60v6M420.58 141.60v6M437.72 141.60v6M454.86 141.60v6" stroke="#ccd6eb" stroke-width="0.8" fill="none"/>
<rect x="47.47" y="99.72" width="9.2" height="41.88" fill="#ff0000" stroke="#5a3d00" stroke-opacity="0.75" stroke-width="0.7"/>
<rect x="64.61" y="104.16" width="9.2" height="37.44" fill="#ff0000" stroke="#5a3d00" stroke-opacity="0.75" stroke-width="0.7"/>
<rect x="81.75" y="106.91" width="9.2" height="34.69" fill="#ff0000" stroke="#5a3d00" stroke-opacity="0.75" stroke-width="0.7"/>
<rect x="98.89" y="113.89" width="9.2" height="27.71" fill="#ff7e00" stroke="#5a3d00" stroke-opacity="0.75" stroke-width="0.7"/>
<rect x="116.03" y="120.87" width="9.2" height="20.73" fill="#ffff00" stroke="#5a3d00" stroke-opacity="0.75" stroke-width="0.7"/>
<rect x="133.17" y="125.10" width="9.2" height="16.50" fill="#ffff00" stroke="#5a3d00" stroke-opacity="0.75" stroke-width="0.7"/>
<rect x="150.31" y="127.85" width="9.2" height="13.75" fill="#ffff00" stroke="#5a3d00" stroke-opacity="0.75" stroke-width="0.7"/>
<rect x="167.45" y="130.18" width="9.2" height="11.42" fill="#ffff00" stroke="#5a3d00" stroke-opacity="0.75" stroke-width="0.7"/>
<rect x="184.59" y="132.29" width="9.2" height="9.31" fill="#00e400" stroke="#5a3d00" stroke-opacity="0.75" stroke-width="0.7"/>
<rect x="201.73" y="133.99" width="9.2" height="7.61" fill="#00e400" stroke="#5a3d00" stroke-opacity="0.75" stroke-width="0.7"/>
<rect x="218.87" y="137.37" width="9.2" height="4.23" fill="#00e400" stroke="#5a3d00" stroke-opacity="0.75" stroke-width="0.7"/>
<rect x="236.01" y="137.37" width="9.2" height="4.23" fill="#00e400" stroke="#5a3d00" stroke-opacity="0.75" stroke-width="0.7"/>
<rect x="253.15" y="137.37" width="9.2" height="4.23" fill="#00e400" stroke="#5a3d00" stroke-opacity="0.75" stroke-width="0.7"/>
<rect x="270.29" y="134.83" width="9.2" height="6.77" fill="#00e400" stroke="#5a3d00" stroke-opacity="0.75" stroke-width="0.7"/>
<rect x="287.43" y="133.56" width="9.2" height="8.04" fill="#00e400" stroke="#5a3d00" stroke-opacity="0.75" stroke-width="0.7"/>
<rect x="304.57" y="130.81" width="9.2" height="10.79" fill="#ffff00" stroke="#5a3d00" stroke-opacity="0.75" stroke-width="0.7"/>
<rect x="321.71" y="128.91" width="9.2" height="12.69" fill="#ffff00" stroke="#5a3d00" stroke-opacity="0.75" stroke-width="0.7"/>
<rect x="338.85" y="105.01" width="9.2" height="36.59" fill="#ff0000" stroke="#5a3d00" stroke-opacity="0.75" stroke-width="0.7"/>
<rect x="355.99" y="107.13" width="9.2" height="34.47" fill="#ff0000" stroke="#5a3d00" stroke-opacity="0.75" stroke-width="0.7"/>
<rect x="373.13" y="113.68" width="9.2" height="27.92" fill="#ff7e00" stroke="#5a3d00" stroke-opacity="0.75" stroke-width="0.7"/>
<rect x="390.27" y="121.08" width="9.2" height="20.52" fill="#ffff00" stroke="#5a3d00" stroke-opacity="0.75" stroke-width="0.7"/>
<rect x="407.41" y="121.72" width="9.2" height="19.88" fill="#ffff00" stroke="#5a3d00" stroke-opacity="0.75" stroke-width="0.7"/>
<rect x="424.55" y="110.93" width="9.2" height="30.67" fill="#ff7e00" stroke="#5a3d00" stroke-opacity="0.75" stroke-width="0.7"/>
<rect x="441.69" y="107.97" width="9.2" height="33.63" fill="#ff0000" stroke="#5a3d00" stroke-opacity="0.75" stroke-width="0.7"/>
<text transform="translate(53.57,150.60) rotate(-45)" text-anchor="end" font-size="6.5" fill="#6a6a6a">8 PM</text>
<text transform="translate(70.71,150.60) rotate(-45)" text-anchor="end" font-size="6.5" fill="#6a6a6a">9 PM</text>
<text transform="translate(87.85,150.60) rotate(-45)" text-anchor="end" font-size="6.5" fill="#6a6a6a">10 PM</text>
<text transform="translate(104.99,150.60) rotate(-45)" text-anchor="end" font-size="6.5" fill="#6a6a6a">11 PM</text>
<text transform="translate(122.13,150.60) rotate(-45)" text-anchor="end" font-size="6.5" fill="#6a6a6a">Jan 11, 2021 12 AM</text>
<text transform="translate(139.27,150.60) rotate(-45)" text-anchor="end" font-size="6.5" fill="#6a6a6a">1 AM</text>
<text transform="translate(156.41,150.60) rotate(-45)" text-anchor="end" font-size="6.5" fill="#6a6a6a">2 AM</text>
<text transform="translate(173.55,150.60) rotate(-45)" text-anchor="end" font-size="6.5" fill="#6a6a6a">3 AM</text>
<text transform="translate(190.69,150.60) rotate(-45)" text-anchor="end" font-size="6.5" fill="#6a6a6a">4 AM</text>
<text transform="translate(207.83,150.60) rotate(-45)" text-anchor="end" font-size="6.5" fill="#6a6a6a">5 AM</text>
<text transform="translate(224.97,150.60) rotate(-45)" text-anchor="end" font-size="6.5" fill="#6a6a6a">6 AM</text>
<text transform="translate(242.11,150.60) rotate(-45)" text-anchor="end" font-size="6.5" fill="#6a6a6a">7 AM</text>
<text transform="translate(259.25,150.60) rotate(-45)" text-anchor="end" font-size="6.5" fill="#6a6a6a">8 AM</text>
<text transform="translate(276.39,150.60) rotate(-45)" text-anchor="end" font-size="6.5" fill="#6a6a6a">9 AM</text>
<text transform="translate(293.53,150.60) rotate(-45)" text-anchor="end" font-size="6.5" fill="#6a6a6a">10 AM</text>
<text transform="translate(310.67,150.60) rotate(-45)" text-anchor="end" font-size="6.5" fill="#6a6a6a">11 AM</text>
<text transform="translate(327.81,150.60) rotate(-45)" text-anchor="end" font-size="6.5" fill="#6a6a6a">12 PM</text>
<text transform="translate(344.95,150.60) rotate(-45)" text-anchor="end" font-size="6.5" fill="#6a6a6a">1 PM</text>
<text transform="translate(362.09,150.60) rotate(-45)" text-anchor="end" font-size="6.5" fill="#6a6a6a">2 PM</text>
<text transform="translate(379.23,150.60) rotate(-45)" text-anchor="end" font-size="6.5" fill="#6a6a6a">3 PM</text>
<text transform="translate(396.37,150.60) rotate(-45)" text-anchor="end" font-size="6.5" fill="#6a6a6a">4 PM</text>
<text transform="translate(413.51,150.60) rotate(-45)" text-anchor="end" font-size="6.5" fill="#6a6a6a">5 PM</text>
<text transform="translate(430.65,150.60) rotate(-45)" text-anchor="end" font-size="6.5" fill="#6a6a6a">6 PM</text>
<text transform="translate(447.79,150.60) rotate(-45)" text-anchor="end" font-size="6.5" fill="#6a6a6a">7 PM</text>
</svg>
<!--/CHART--></div>

<div id="cc" class="abs">
<div class="h"><div style="padding-top:2.4px">Current Conditions</div><div style="font-size:6.8px;line-height:11.6px;position:relative;top:0.7px">observed at</div><div style="line-height:12.6px">Jan 11, 2021 7:00 PM (LT)</div></div>
<div class="r">160 AQI<br>Unhealthy<br>PM2.5</div>
<div class="hm">Health Message</div>
<div class="tx">Everyone may begin to experience health<br>effects when AQI values are between 151<br>and 200. Members of sensitive groups may<br>experience more serious health effects.</div>
</div>
</body>
</html>
